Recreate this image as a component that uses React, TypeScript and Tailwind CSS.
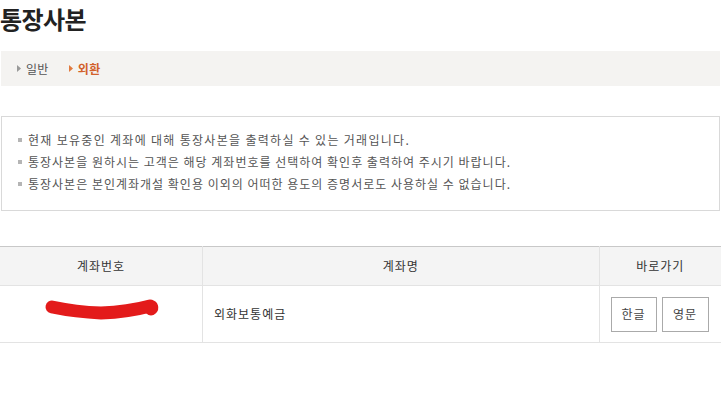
import React from "react";

const font = { fontFamily: '"Noto Sans CJK KR", "Noto Sans", sans-serif' };

function Tri({ color }: { color: string }) {
    return (
        <svg width="4" height="7" viewBox="0 0 4 7" className="mr-[5px]">
            <polygon points="0,0 4,3.5 0,7" fill={color} />
        </svg>
    );
}

const notes = [
    "현재 보유중인 계좌에 대해 통장사본을 출력하실 수 있는 거래입니다.",
    "통장사본을 원하시는 고객은 해당 계좌번호를 선택하여 확인후 출력하여 주시기 바랍니다.",
    "통장사본은 본인계좌개설 확인용 이외의 어떠한 용도의 증명서로도 사용하실 수 없습니다.",
];

export default function App() {
    return (
        <div className="w-[724px] h-[404px] bg-white text-[#333] overflow-hidden" style={font}>
            <h1 className="h-[51px] pt-[2px] text-[24px] font-bold leading-[34px] text-[#222] tracking-[-0.6px]">통장사본</h1>

            <div className="mx-[1px] w-[719px] h-[35px] bg-[#f4f3f1] flex items-center pl-[16px] text-[12px]">
                <div className="flex items-center text-[#555] tracking-[0.3px]">
                    <Tri color="#999" />
                    <span>일반</span>
                </div>
                <div className="flex items-center ml-[20px] text-[#d2612b] font-bold tracking-[0.5px]">
                    <Tri color="#e07a3f" />
                    <span>외환</span>
                </div>
            </div>

            <div className="mt-[30px] ml-[1px] w-[719px] h-[95px] border border-[#d9d9d9] pt-[12px] pl-[16px]">
                <ul className="text-[12px] leading-[22px] text-[#555]">
                    {notes.map((n, i) => (
                        <li key={n} className="flex items-center">
                            <span className="w-[4px] h-[4px] bg-[#b5b5b5] mr-[6px]" />
                            <span className={i === 0 ? "tracking-[1.3px]" : "tracking-[1px]"}>{n}</span>
                        </li>
                    ))}
                </ul>
            </div>

            <table className="mt-[35px] w-[721px] border-collapse text-[12px] text-[#333]">
                <thead>
                    <tr className="bg-[#f4f4f4] border-t border-t-[#c8c8c8] border-b border-b-[#e3e3e3]">
                        <th className="h-[39px] w-[202px] font-normal text-center border-r border-[#e3e3e3] tracking-[1px]">계좌번호</th>
                        <th className="font-normal text-center border-r border-[#e3e3e3] tracking-[1px]">계좌명</th>
                        <th className="w-[122px] font-normal text-center tracking-[1px]">바로가기</th>
                    </tr>
                </thead>
                <tbody>
                    <tr className="border-b border-[#e3e3e3]">
                        <td className="h-[56px] border-r border-[#e3e3e3]">
                            <svg width="202" height="56" viewBox="0 0 202 56" className="block">
                                <path d="M52,21 Q76,26 101,27 Q128,26 150,20 Q153,21 151,23" stroke="#e31b1b" strokeWidth="13" strokeLinecap="round" strokeLinejoin="round" fill="none" />
                            </svg>
                        </td>
                        <td className="pl-[11px] border-r border-[#e3e3e3] tracking-[1px]">외화보통예금</td>
                        <td>
                            <div className="flex gap-[5px] pl-[11px]">
                                <button className="w-[46px] h-[35px] border border-[#aaa] bg-white text-[#444] tracking-[1px]">한글</button>
                                <button className="w-[47px] h-[35px] border border-[#aaa] bg-white text-[#444] tracking-[1px]">영문</button>
                            </div>
                        </td>
                    </tr>
                </tbody>
            </table>
        </div>
    );
}
